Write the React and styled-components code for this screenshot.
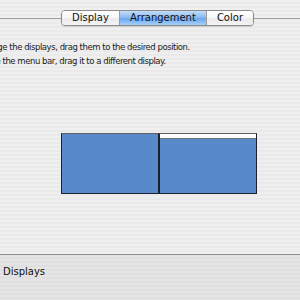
import React from 'react';
import styled, { createGlobalStyle } from 'styled-components';

const Global = createGlobalStyle`
  html, body {
    margin: 0;
    padding: 0;
    overflow: hidden;
    background: #ececec;
  }
  body {
    font-family: "DejaVu Sans", "Liberation Sans", sans-serif;
    color: #111;
  }
`

const stripes = (a, b) => `repeating-linear-gradient(to bottom, ${a} 0px, ${a} 2px, ${b} 2px, ${b} 4px)`

// the window is wider than the frame: the screenshot is a crop of it
const Window = styled.div`
  width: 443px;
  height: 300px;
  margin-left: -64px;
  display: flex;
  flex-direction: column;
  background: ${stripes('#efefef', '#eaeaea')};
`

const Main = styled.div`
  flex: 0 0 255px;
  display: flex;
  flex-direction: column;
  padding-top: 10px;
  box-sizing: border-box;
  border-bottom: 1px solid #8e8e8e;
`

const TabRow = styled.div`
  display: flex;
  justify-content: center;
  height: 16px;
  background: linear-gradient(to bottom, transparent 8px, #a2a2a2 8px, #a2a2a2 9px, transparent 9px);
`

const Tabs = styled.div`
  display: flex;
  border: 1px solid #8a8a8a;
  border-radius: 4px;
  overflow: hidden;
  box-shadow: 0 1px 1px rgba(0, 0, 0, 0.12);
`

const Tab = styled.div`
  padding: 0 10px;
  font-size: 10px;
  line-height: 14px;
  color: #111;
  background: ${p => p.$active
    ? 'linear-gradient(to bottom, #c3dcf8 0%, #8dbdf3 45%, #6ba8ef 55%, #a6d0fa 100%)'
    : 'linear-gradient(to bottom, #ffffff 0%, #f6f6f6 50%, #eaeaea 55%, #f4f4f4 100%)'};
  & + & {
    border-left: 1px solid #9c9c9c;
  }
`

const Help = styled.div`
  margin-top: 14px;
  padding-left: 23px;
  font-size: 8.5px;
  letter-spacing: -0.45px;
  line-height: 14px;
  color: #1a1a1a;
  white-space: nowrap;
`

const Arrangement = styled.div`
  margin-top: 65px;
  display: flex;
  justify-content: center;
  padding-left: 3px;
`

const Screen = styled.div`
  width: 96px;
  height: 59px;
  background: #5889ca;
  border: 1px solid #1c222c;
  border-top-color: #5e5e5e;
  display: flex;
  flex-direction: column;
`

const MenuBar = styled.div`
  height: 4px;
  background: #ffffff;
  border-bottom: 1px solid #6f7378;
`

const Footer = styled.div`
  flex: 1;
  background: ${stripes('#e4e4e4', '#dfdfdf')};
  padding: 10px 0 0 67px;
`

const Label = styled.div`
  font-size: 10px;
  line-height: 14px;
  color: #111;
`

const App = () => {
  return (
    <>
      <Global />
      <Window>
        <Main>
          <TabRow>
            <Tabs>
              <Tab>Display</Tab>
              <Tab $active>Arrangement</Tab>
              <Tab>Color</Tab>
            </Tabs>
          </TabRow>
          <Help>
            <div>To rearrange the displays, drag them to the desired position.</div>
            <div>To relocate the menu bar, drag it to a different display.</div>
          </Help>
          <Arrangement>
            <Screen />
            <Screen>
              <MenuBar />
            </Screen>
          </Arrangement>
        </Main>
        <Footer>
          <Label>Displays</Label>
        </Footer>
      </Window>
    </>
  );
};

export default App;
